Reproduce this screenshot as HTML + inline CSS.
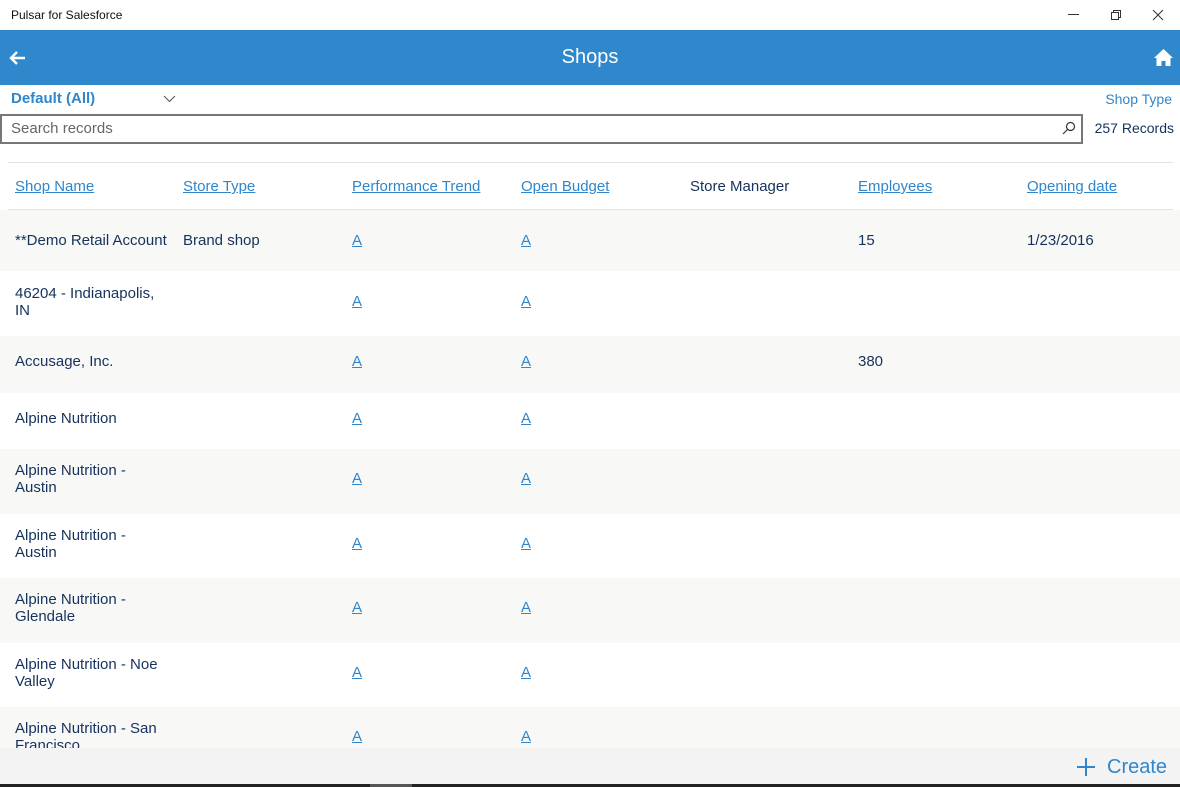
<!DOCTYPE html>
<html><head><style>
*{margin:0;padding:0;box-sizing:border-box}
body{width:1180px;height:787px;overflow:hidden;background:#fff;font-family:"Liberation Sans",sans-serif;color:#16325c;position:relative}
.abs{position:absolute;white-space:nowrap}
.title{left:11px;top:8px;font-size:12px;color:#111}
.bar{left:0;top:30px;width:1180px;height:55px;background:#3088cc}
.bar .t{position:absolute;left:0;right:0;top:16px;text-align:center;color:#fff;font-size:20px}
.hd{position:absolute;top:178px;font-size:15px;color:#2f86cc;text-decoration:underline;white-space:nowrap}
.row{position:absolute;left:0;width:1180px}
.g{background:#f8f8f7}
.c{position:absolute;font-size:15px;line-height:17px;white-space:nowrap}
.a{position:absolute;font-size:15px;color:#2f86cc;text-decoration:underline}
</style></head><body>
<div class="abs title">Pulsar for Salesforce</div>
<svg class="abs" style="left:1068px;top:14px" width="12" height="2"><rect width="11" height="1" fill="#333"/></svg>
<svg class="abs" style="left:1110px;top:9px" width="12" height="12" fill="none" stroke="#333"><rect x="1.5" y="3.5" width="7" height="7"/><path d="M3.5 3.5V1.5h7v7h-2"/></svg>
<svg class="abs" style="left:1152px;top:9px" width="12" height="12" stroke="#333"><path d="M1 1l10 10M11 1L1 11"/></svg>
<div class="abs bar"><div class="t">Shops</div>
<svg class="abs" style="left:8px;top:20px" width="18" height="16" fill="none" stroke="#fff" stroke-width="2.4"><path d="M17 8H3M9 2L3 8l6 6"/></svg>
<svg class="abs" style="left:1154px;top:19px" width="19" height="17" fill="#fff"><path d="M9.5 0L0 9h2.5v8h5v-5h4v5h5V9H19z"/></svg>
</div>
<div class="abs" style="left:11px;top:90px;font-size:15px;font-weight:bold;color:#2f86cc">Default (All)</div>
<svg class="abs" style="left:163px;top:95px" width="13" height="8" fill="none" stroke="#555"><path d="M1 1l5.5 5.5L12 1"/></svg>
<div class="abs" style="right:8px;top:91px;font-size:14px;color:#2f86cc">Shop Type</div>
<div class="abs" style="left:0;top:114px;width:1083px;height:30px;border:2px solid #777;background:#fff"></div>
<div class="abs" style="left:11px;top:120px;font-size:15px;color:#666">Search records</div>
<svg class="abs" style="left:1062px;top:121px" width="14" height="14" fill="none" stroke="#333" stroke-width="1.2"><circle cx="8.5" cy="5.5" r="4"/><path d="M5.5 8.5L1 13"/></svg>
<div class="abs" style="right:6px;top:120px;font-size:14px">257 Records</div>
<div class="abs" style="left:8px;top:162px;width:1165px;height:1px;background:#e3e3e3"></div>
<div class="hd" style="left:15px">Shop Name</div>
<div class="hd" style="left:183px">Store Type</div>
<div class="hd" style="left:352px">Performance Trend</div>
<div class="hd" style="left:521px">Open Budget</div>
<div class="hd" style="left:690px;color:#16325c;text-decoration:none">Store Manager</div>
<div class="hd" style="left:858px">Employees</div>
<div class="hd" style="left:1027px">Opening date</div>
<div class="abs" style="left:8px;top:209px;width:1165px;height:1px;background:#e3e3e3"></div>

<div class="row g" style="top:210px;height:61px"><div class="c" style="left:15px;top:22px">**Demo Retail Account</div><div class="c" style="left:183px;top:22px">Brand shop</div><div class="a" style="left:352px;top:22px">A</div><div class="a" style="left:521px;top:22px">A</div><div class="c" style="left:858px;top:22px">15</div><div class="c" style="left:1027px;top:22px">1/23/2016</div></div>
<div class="row" style="top:271px;height:65px"><div class="c" style="left:15px;top:14px">46204 - Indianapolis,<br>IN</div><div class="a" style="left:352px;top:22px">A</div><div class="a" style="left:521px;top:22px">A</div></div>
<div class="row g" style="top:336px;height:57px"><div class="c" style="left:15px;top:17px">Accusage, Inc.</div><div class="a" style="left:352px;top:17px">A</div><div class="a" style="left:521px;top:17px">A</div><div class="c" style="left:858px;top:17px">380</div></div>
<div class="row" style="top:393px;height:56px"><div class="c" style="left:15px;top:17px">Alpine Nutrition</div><div class="a" style="left:352px;top:17px">A</div><div class="a" style="left:521px;top:17px">A</div></div>
<div class="row g" style="top:449px;height:65px"><div class="c" style="left:15px;top:13px">Alpine Nutrition -<br>Austin</div><div class="a" style="left:352px;top:21px">A</div><div class="a" style="left:521px;top:21px">A</div></div>
<div class="row" style="top:514px;height:64px"><div class="c" style="left:15px;top:13px">Alpine Nutrition -<br>Austin</div><div class="a" style="left:352px;top:21px">A</div><div class="a" style="left:521px;top:21px">A</div></div>
<div class="row g" style="top:578px;height:65px"><div class="c" style="left:15px;top:13px">Alpine Nutrition -<br>Glendale</div><div class="a" style="left:352px;top:21px">A</div><div class="a" style="left:521px;top:21px">A</div></div>
<div class="row" style="top:643px;height:64px"><div class="c" style="left:15px;top:13px">Alpine Nutrition - Noe<br>Valley</div><div class="a" style="left:352px;top:21px">A</div><div class="a" style="left:521px;top:21px">A</div></div>
<div class="row g" style="top:707px;height:41px;overflow:hidden"><div class="c" style="left:15px;top:13px">Alpine Nutrition - San<br>Francisco</div><div class="a" style="left:352px;top:21px">A</div><div class="a" style="left:521px;top:21px">A</div></div>
<div class="abs" style="left:0;top:748px;width:1180px;height:36px;background:#f3f3f3"></div>
<svg class="abs" style="left:1077px;top:758px" width="18" height="18" stroke="#2f86cc" stroke-width="2"><path d="M9 0v18M0 9h18"/></svg>
<div class="abs" style="left:1107px;top:756px;font-size:20px;color:#2f86cc">Create</div>
<div class="abs" style="left:0;top:784px;width:1180px;height:3px;background:#222"></div>
<div class="abs" style="left:370px;top:784px;width:42px;height:3px;background:#555"></div>
</body></html>
